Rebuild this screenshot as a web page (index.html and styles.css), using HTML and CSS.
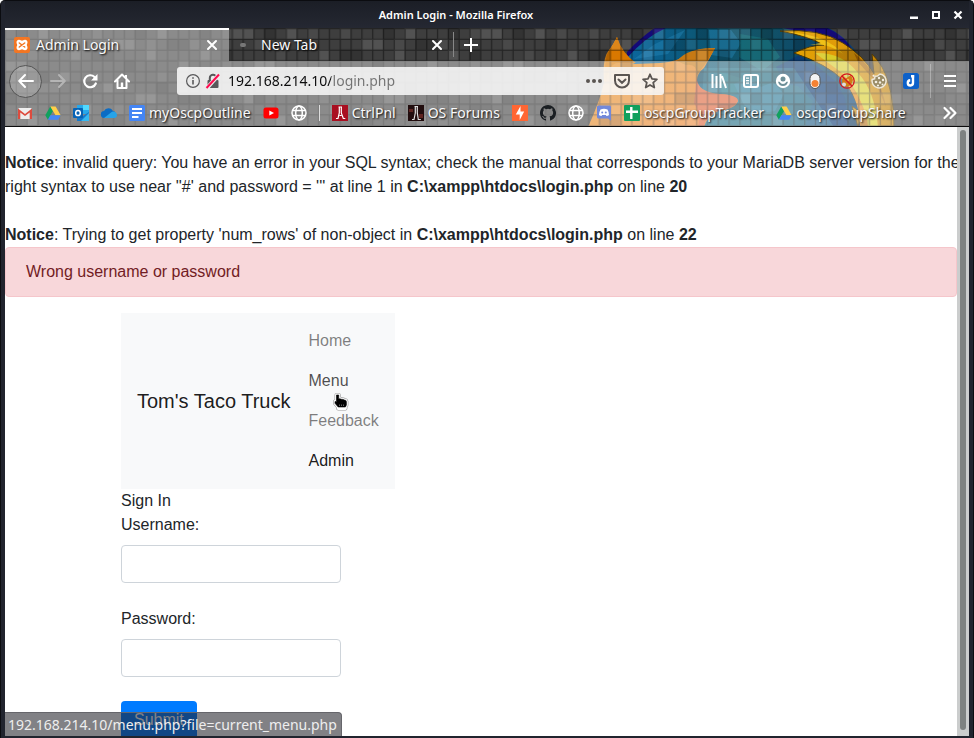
FILE: index.html
```html
<!DOCTYPE html>
<html lang="en">
<head>
<meta charset="utf-8">
<title>Admin Login</title>
<link rel="stylesheet" href="styles.css">
</head>
<body>
<svg class="defs" aria-hidden="true">
  <symbol id="close" viewBox="0 0 16 16"><path d="M4 4l8 8M12 4l-8 8" fill="none" stroke="currentColor" stroke-width="2" stroke-linecap="round"/></symbol>
  <symbol id="globe" viewBox="0 0 16 16"><g fill="none" stroke="#fff" stroke-width="1.500"><circle cx="8" cy="8" r="7"/><ellipse cx="8" cy="8" rx="3.300" ry="7"/><path d="M1.500 5.500h13M1.500 10.500h13"/></g></symbol>
  <symbol id="drive" viewBox="0 0 16 16"><path d="M5.300 1.500L.3 10.300l2.600 4.400L8 5.900z" fill="#11a15e"/><path d="M5.300 1.500h5.300l5.100 8.800h-5.200z" fill="#ffcf48"/><path d="M5.400 10.300h10.300l-2.600 4.400H2.900z" fill="#4587f4"/></symbol>
</svg>
<div class="window">
  <header class="titlebar">
    <span class="title">Admin Login - Mozilla Firefox</span>
    <div class="controls">
      <button aria-label="Minimize"><svg viewBox="0 0 16 16"><path d="M4 9.500h8V12H4z" fill="#fff"/></svg></button>
      <button aria-label="Maximize"><svg viewBox="0 0 16 16"><path d="M5 5h6v6H5z" fill="none" stroke="#fff" stroke-width="2"/></svg></button>
      <button aria-label="Close window"><svg viewBox="0 0 16 16"><path d="M4.500 4.500l7 7M11.500 4.500l-7 7" stroke="#fff" stroke-width="2.200"/></svg></button>
    </div>
  </header>

  <div class="chrome">
    <svg class="art" viewBox="580 28 389 99" aria-hidden="true">
      <defs>
        <linearGradient id="sea" x1="0" x2="1"><stop offset="0" stop-color="#0a6dae"/><stop offset=".35" stop-color="#0c5878"/><stop offset=".6" stop-color="#125366"/><stop offset="1" stop-color="#063b70"/></linearGradient>
        <linearGradient id="tail" x1="0" x2="1"><stop offset="0" stop-color="#e3a400"/><stop offset=".5" stop-color="#e09b0a"/><stop offset="1" stop-color="#bb7a00"/></linearGradient>
        <linearGradient id="fur" x1="0" x2="1" y1="0" y2="1"><stop offset="0" stop-color="#e08a12"/><stop offset="1" stop-color="#ea8030"/></linearGradient>
      </defs>
      <path d="M624 61Q645 36 667 26H825Q850 38 862 62L870 127H600V92z" fill="url(#sea)"/>
      <path d="M627 58Q645 37 668 27h-12Q640 38 627 52zM780 27h45q20 8 28 24l-18-10z" fill="#140a78"/>
      <path d="M655 44l30-14-17 24-34 5zM709 30h22l10 13-9 15-21-3z" fill="#2889bb" opacity=".4"/>
      <path d="M740 34l28 5 12 18-18 14-23-14zM720 72l24 7-4 14-18 3z" fill="#18707a" opacity=".7"/>
      <path d="M799 55l19 12 17 14 10 17 3 29h-43l8-26-15-15-13-2-9-17z" fill="#0a2f78" opacity=".55"/>
      <path d="M734 84q16-10 27 3l12-5 11 12-9 17-21 3-10-9z" fill="#2f7eaa" opacity=".55"/>
      <path d="M704 68h90l40 59H700z" fill="#2f8aa0" opacity=".4"/>
      <path d="M617 37Q623 60 635 64L660 63Q678 62 687 54Q697 48 715 48Q710 58 704 68Q696 74 697 83Q701 94 720 94Q735 95 738 101Q735 109 718 111Q706 118 704 127H588Q600 101 604 82Q602 58 609 50Q613 45 617 37z" fill="url(#fur)"/>
      <path d="M617 37q5 16 19 26h-17q-10-1-13 19-3-26 5-34z" fill="#d97800"/>
      <path d="M697 75q-2 17 23 19 18 1 18 7-4 8-20 10-14 7-14 16h-6q3-12-4-24z" fill="#dd6236"/>
      <path d="M677 61q10-13 38-13-7 13-18 27 0-12-11-10z" fill="#c67914"/>
      <path d="M780 31Q820 28 843 43Q864 56 874 74L872 54Q884 66 888 82Q894 101 894 127H864Q862 113 858 127L852 106L861 113Q854 94 844 81Q827 64 794 53Q810 45 824 45Q807 36 780 31z" fill="url(#tail)" stroke="#503b08" stroke-width="1"/>
      <path d="M815 53Q842 52 858 73Q875 91 878 127H865Q865 97 842 73z" fill="#d8cb27"/>
      <path d="M788 32q39 3 55 22-15-12-33-9l11-2q-12-7-33-11z" fill="#efc018"/>
      <path d="M854 53q26 20 32 54l-11-26-17-19z" fill="#aa6500"/>
      <path d="M842 76q24 25 26 51h-8q0-27-18-51z" fill="#e18a1c"/>
    </svg>
    <svg class="tiles" aria-hidden="true">
      <defs>
        <pattern id="mosaic" width="23" height="9" patternUnits="userSpaceOnUse" patternTransform="scale(10.8)">
          <path d="M1 0h1v1H1zM4 1h1v1H4zM8 2h2v1H8zM12 0h1v1h-1zM15 1h2v1h-2zM20 2h1v1h-1zM18 0h1v1h-1zM2 4h2v1H2zM7 5h1v1H7zM11 3h1v1h-1zM16 6h2v1h-2zM21 4h1v1h-1zM4 7h1v1H4zM9 8h2v1H9zM14 5h1v1h-1zM20 7h2v1h-2zM0 6h1v1H0zM18 4h1v1h-1z" fill="#000" opacity=".18"/>
          <path d="M3 0h1v1H3zM6 2h1v1H6zM10 1h2v1h-2zM14 0h1v1h-1zM13 2h1v1h-1zM18 2h1v1h-1zM21 0h2v1h-2zM0 3h2v1H0zM5 4h1v1H5zM9 5h1v1H9zM12 6h2v1h-2zM19 5h1v1h-1zM15 8h1v1h-1zM2 8h1v1H2zM7 7h1v1H7zM22 6h1v1h-1zM16 3h1v1h-1z" fill="#fff" opacity=".1"/>
          <path d="M0 1h1v1H0zM5 0h1v1H5zM2 2h1v1H2zM8 0h1v1H8zM13 1h1v1h-1zM17 1h1v1h-1zM20 0h1v1h-1zM3 5h2v1H3zM10 7h1v1h-1zM6 6h1v1H6zM14 4h1v1h-1zM17 8h1v1h-1zM20 3h1v1h-1z" fill="#fff" opacity=".06"/>
          <path d="M.05 0v9M1.050 0v9M2.050 0v9M3.050 0v9M4.050 0v9M5.050 0v9M6.050 0v9M7.050 0v9M8.050 0v9M9.050 0v9M10.050 0v9M11.050 0v9M12.050 0v9M13.050 0v9M14.050 0v9M15.050 0v9M16.050 0v9M17.050 0v9M18.050 0v9M19.050 0v9M20.050 0v9M21.050 0v9M22.050 0v9M0 .05h23M0 1.050h23M0 2.050h23M0 3.050h23M0 4.050h23M0 5.050h23M0 6.050h23M0 7.050h23M0 8.050h23" fill="none" stroke="#000" stroke-width=".12" opacity=".42"/>
        </pattern>
      </defs>
      <rect width="100%" height="100%" fill="url(#mosaic)"/>
    </svg>

    <div class="tabs">
      <div class="tab selected">
        <svg class="icon" viewBox="0 0 16 16"><rect width="16" height="16" rx="2" fill="#f37623"/><path d="M5 2.800c1.500 0 2 1 3 1s1.500-1 3-1 2.500 1 2.500 2.500S12.800 7.200 12.800 8s.7 1.200.7 2.700-1 2.500-2.500 2.500-2-1-3-1-1.500 1-3 1-2.500-1-2.500-2.500S3.200 8.800 3.200 8s-.7-1.200-.7-2.700S3.500 2.800 5 2.800z" fill="#fff"/><path d="M5.300 6L10.700 10M10.700 6L5.300 10" stroke="#f37623" stroke-width="1.500" stroke-linecap="round"/></svg>
        <span class="tab-label">Admin Login</span>
        <button class="tab-close" aria-label="Close Admin Login"><svg class="icon"><use href="#close"/></svg></button>
      </div>
      <div class="tab">
        <span class="dot"></span>
        <span class="tab-label blank">New Tab</span>
        <button class="tab-close" aria-label="Close New Tab"><svg class="icon"><use href="#close"/></svg></button>
      </div>
      <button class="new-tab" aria-label="Open a new tab"><svg class="icon" viewBox="0 0 16 16"><path d="M8 1v14M1 8h14" stroke="#fff" stroke-width="2"/></svg></button>
    </div>

    <div class="toolbars">
      <nav class="navbar" aria-label="Navigation">
        <button class="tool back" aria-label="Back"><svg class="icon" viewBox="0 0 16 16"><path d="M15 8H1.500M7 2L1.200 8 7 14" fill="none" stroke="#fff" stroke-width="2" stroke-linecap="round" stroke-linejoin="round"/></svg></button>
        <button class="tool" aria-label="Forward" disabled><svg class="icon" viewBox="0 0 16 16"><path d="M1 8h13.500M9 2l5.800 6L9 14" fill="none" stroke="#b5b5b5" stroke-width="2" stroke-linecap="round" stroke-linejoin="round"/></svg></button>
        <button class="tool" aria-label="Reload"><svg class="icon" viewBox="0 0 16 16"><path d="M13.800 10.500A6 6 0 1 1 12.500 4" fill="none" stroke="#fff" stroke-width="2.200" stroke-linecap="round"/><path d="M15.500 1v6.500H9z" fill="#fff"/></svg></button>
        <button class="tool" aria-label="Home"><svg class="icon" viewBox="0 0 16 16"><path d="M1 8.500l7-7 7 7M3.500 7.500V15h9V7.500" fill="none" stroke="#fff" stroke-width="2" stroke-linecap="round" stroke-linejoin="round"/><path d="M6.800 9.500h2.400V14H6.800zM11 2h2v4l-2-2z" fill="#fff"/></svg></button>
        <div class="urlbar">
          <svg class="icon" viewBox="0 0 16 16"><circle cx="8" cy="8" r="6.400" fill="none" stroke="#58585a" stroke-width="1.200"/><path d="M7.200 7h1.600v4.500H7.200zM7.200 4.200h1.600v1.600H7.200z" fill="#58585a"/></svg>
          <svg class="icon" viewBox="0 0 16 16"><path d="M4.800 8V5a3.200 3.200 0 0 1 6.400 0v3" fill="none" stroke="#58585a" stroke-width="2"/><rect x="2.500" y="7" width="11" height="8" rx="1" fill="#58585a"/><path d="M2 15L14 1.500" stroke="#eee" stroke-width="4"/><path d="M1.500 15L14 1.500" stroke="#ff0b4f" stroke-width="2"/></svg>
          <input class="address" type="text" aria-label="Address" value="192.168.214.10/login.php">
          <button aria-label="Page actions"><svg class="icon" viewBox="0 0 16 16"><g fill="#5a5552"><circle cx="2" cy="8" r="2"/><circle cx="8" cy="8" r="2"/><circle cx="14" cy="8" r="2"/></g></svg></button>
          <button aria-label="Save to Pocket"><svg class="icon" viewBox="0 0 16 16"><path d="M1 2h14v5.500c0 4-3 7-7 7s-7-3-7-7z" fill="none" stroke="#5a5552" stroke-width="2" stroke-linejoin="round"/><path d="M4.500 6.500L8 9.800l3.500-3.300" fill="none" stroke="#5a5552" stroke-width="2" stroke-linecap="round"/></svg></button>
          <button aria-label="Bookmark this page"><svg class="icon" viewBox="0 0 16 16"><path d="M8 1.300l2 4.500 4.900.5-3.700 3.300 1.100 4.900L8 12l-4.300 2.500 1.100-4.900L1.100 6.300 6 5.800z" fill="none" stroke="#5a5552" stroke-width="1.800" stroke-linejoin="round"/></svg></button>
        </div>
        <button class="tool" aria-label="Library"><svg class="icon" viewBox="0 0 16 16"><path d="M1.500 1v14M5.500 3v12M9.500 1v14M11 3l4 12" stroke="#fff" stroke-width="2"/></svg></button>
        <button class="tool" aria-label="Sidebars"><svg class="icon" viewBox="0 0 16 16"><rect x="1" y="2" width="14" height="12" rx="2" fill="none" stroke="#fff" stroke-width="2"/><path d="M8 2v12" stroke="#fff" stroke-width="1.600"/><path d="M3 5.200h3M3 7.700h3M3 10.200h3" stroke="#fff" stroke-width="1.200"/></svg></button>
        <button class="tool" aria-label="Account"><svg class="icon" viewBox="0 0 16 16"><circle cx="8" cy="8" r="7.200" fill="#fff"/><circle cx="8" cy="6" r="2.500" fill="#6d8f98"/><path d="M3 8.800h1.500Q6 11 8 11t3.500-2.200H13Q12 13 8 13T3 8.800z" fill="#6d8f98"/></svg></button>
        <button class="tool" aria-label="Toggle extension"><svg class="icon" viewBox="0 0 16 16"><rect x="3" y=".5" width="10" height="15" rx="5" fill="#f4f4f4" stroke="#555"/><circle cx="8" cy="10.500" r="3.500" fill="#f58233"/></svg></button>
        <button class="tool" aria-label="Proxy extension"><svg class="icon" viewBox="0 0 16 16"><path d="M3 8l1-4 2 2 3-2 3-2 2 5-2 5-4 2-4-1z" fill="#d37b15"/><circle cx="5" cy="11.500" r="2" fill="#ddd"/><circle cx="9" cy="7" r="1.300" fill="#f2b84c"/><circle cx="8" cy="8" r="7.200" fill="none" stroke="#d4161c" stroke-width="1.300"/><path d="M3 3l10 10" stroke="#d4161c" stroke-width="1.400"/></svg></button>
        <button class="tool" aria-label="Cookies"><svg class="icon" viewBox="0 0 16 16"><path d="M9 1a7 7 0 1 1-7.800 5.500l2.400-.7.400-2.600L6.500 3z" fill="#9a8c66" stroke="#eee8da" stroke-width="1.500" stroke-linejoin="round"/><g fill="#f4efe3"><circle cx="8" cy="5" r="1.200"/><circle cx="12" cy="7" r="1.200"/><circle cx="5" cy="9" r="1.300"/><circle cx="9" cy="9.500" r="1.200"/><circle cx="7" cy="12.500" r="1.100"/><circle cx="11.500" cy="11.500" r="1"/><circle cx="2.500" cy="2.800" r="1"/></g></svg></button>
        <button class="tool" aria-label="Joplin clipper"><svg class="icon" viewBox="0 0 16 16"><rect width="16" height="16" rx="2.500" fill="#0d61c9"/><path d="M8 3.300h3.300M10 3v6.800a2.600 2.600 0 1 1-2.800-2.500" fill="none" stroke="#fff" stroke-width="2.400"/></svg></button>
        <span class="divider"></span>
        <button class="tool" aria-label="Open menu"><svg class="icon" viewBox="0 0 16 16"><path d="M2 3h12M2 8h12M2 13h12" stroke="#fff" stroke-width="2.200"/></svg></button>
      </nav>

      <nav class="bookmarks" aria-label="Bookmarks">
        <a href="#" aria-label="Gmail"><svg class="icon" viewBox="0 0 16 16"><path d="M1.500 3h13v11h-13z" fill="#eee"/><path d="M1 14V3.500L8 9l7-5.500V14h-2.300V7.500L8 11 3.300 7.500V14z" fill="#dd4b3e"/></svg></a>
        <a href="#" aria-label="Drive"><svg class="icon"><use href="#drive"/></svg></a>
        <a href="#" aria-label="Outlook"><svg class="icon" viewBox="0 0 16 16"><path d="M4 0h12v9H4z" fill="#28a8ea"/><path d="M10 0h6v5h-6z" fill="#50d9ff"/><path d="M4 7l6 4 6-4v9H4z" fill="#1479cc"/><path d="M8 16l8-8v8z" fill="#35b8f1"/><rect y="3" width="10" height="10" rx="1" fill="#0763b5"/><ellipse cx="5" cy="8" rx="2.300" ry="2.600" fill="none" stroke="#fff" stroke-width="1.500"/></svg></a>
        <a href="#" aria-label="OneDrive"><svg class="icon" viewBox="0 0 16 16"><path d="M3.500 13a3.500 3.500 0 0 1-.5-7 5 5 0 0 1 8.800-.3A4 4 0 0 1 13 13z" fill="#0c6cc4"/><path d="M3 13l7-5.500c2-2 6-.5 6 2.700 0 1.800-1.300 2.800-2.700 2.800z" fill="#27a3e8"/></svg></a>
        <a href="#"><svg class="icon" viewBox="0 0 16 16"><rect width="16" height="16" rx="1.500" fill="#4485f4"/><path d="M3 4h10M3 8h10M3 12h6.500" stroke="#fff" stroke-width="1.800"/></svg><span>myOscpOutline</span></a>
        <a href="#" aria-label="YouTube"><svg class="icon" viewBox="0 0 16 16"><rect x=".5" y="2.500" width="15" height="11" rx="2.500" fill="#f00"/><path d="M6.300 5.500v5L11 8z" fill="#fff"/></svg></a>
        <a href="#" aria-label="Web page"><svg class="icon"><use href="#globe"/></svg></a>
        <span class="bar"></span>
        <a href="#"><svg class="icon" viewBox="0 0 16 16"><path d="M0 0h16v16H0z" fill="#a90f21"/><path d="M6.500 2h3.500M7.300 2v6L6 13.500H4M9.300 2v6l2 5.500h2M7.500 10.500h2" fill="none" stroke="#fff" stroke-width="1.200"/></svg><span>CtrlPnl</span></a>
        <a href="#"><svg class="icon" viewBox="0 0 16 16"><path d="M0 0h16v16H0z" fill="#210d0e"/><path d="M1 4h4v3H1zM11 9h4v4h-4z" fill="#5e2420"/><path d="M6.500 1.500h3.500M7.300 1.500V8L6 14.500H4M9.300 1.500V8l1 6.500h2.500" fill="none" stroke="#ddd" stroke-width="1.200"/></svg><span>OS Forums</span></a>
        <a href="#" aria-label="Burp"><svg class="icon" viewBox="0 0 16 16"><path d="M0 0h16v16H0z" fill="#ff6633"/><path d="M8.500 1v5.500h3.700L7.700 15V9.500H3.800z" fill="#fff"/></svg></a>
        <a href="#" aria-label="GitHub"><svg class="icon" viewBox="0 0 16 16"><path d="M8 0C3.580 0 0 3.580 0 8c0 3.540 2.290 6.530 5.470 7.590.4.070.55-.17.55-.38 0-.19-.01-.82-.01-1.490-2.010.37-2.530-.49-2.690-.94-.09-.23-.48-.94-.82-1.130-.28-.15-.68-.52-.01-.53.63-.01 1.080.58 1.230.82.72 1.210 1.870.87 2.330.66.07-.52.28-.87.51-1.070-1.780-.2-3.640-.89-3.640-3.950 0-.87.31-1.590.82-2.150-.08-.2-.36-1.020.08-2.120 0 0 .67-.21 2.200.82a7.500 7.500 0 0 1 4 0c1.530-1.040 2.200-.82 2.200-.82.44 1.100.16 1.920.08 2.120.51.56.82 1.270.82 2.150 0 3.070-1.870 3.750-3.650 3.950.29.25.54.73.54 1.480 0 1.070-.01 1.930-.01 2.200 0 .21.15.46.55.38A8 8 0 0 0 8 0z" fill="#1b1f23"/></svg></a>
        <a href="#" aria-label="Web page"><svg class="icon"><use href="#globe"/></svg></a>
        <a href="#" aria-label="Discord"><svg class="icon" viewBox="0 0 16 16"><path d="M2.500.5h11a1.500 1.500 0 0 1 1.500 1.500v13.800L12 13.500H2.500A1.500 1.500 0 0 1 1 12V2A1.500 1.500 0 0 1 2.500.5z" fill="#7289da"/><path d="M4.500 4.500q3.500-1.500 7 0 1.500 2.500 1.500 5.500-1 1-2.500 1l-.7-1H6.200l-.7 1Q4 11 3 10q0-3 1.500-5.500z" fill="#fff"/><circle cx="6.200" cy="7.600" r="1" fill="#7289da"/><circle cx="9.800" cy="7.600" r="1" fill="#7289da"/></svg></a>
        <a href="#"><svg class="icon" viewBox="0 0 16 16"><rect width="16" height="16" rx="1" fill="#11a05d"/><path d="M2 6.800h12M7.300 2v12" stroke="#fff" stroke-width="2.400"/></svg><span>oscpGroupTracker</span></a>
        <a href="#"><svg class="icon"><use href="#drive"/></svg><span>oscpGroupShare</span></a>
        <button class="tool more" aria-label="More bookmarks"><svg class="icon" viewBox="0 0 16 16"><path d="M2.500 3l5 5-5 5M8.500 3l5 5-5 5" fill="none" stroke="#fff" stroke-width="2.200" stroke-linecap="round" stroke-linejoin="round"/></svg></button>
      </nav>
    </div>
  </div>

  <div class="viewport">
    <main class="page">
      <div class="notices">
        <br>
        <b>Notice</b>: invalid query: You have an error in your SQL syntax; check the manual that corresponds to your MariaDB server version for the right syntax to use near ''#' and password = ''' at line 1 in <b>C:\xampp\htdocs\login.php</b> on line <b>20</b><br>
        <br>
        <b>Notice</b>: Trying to get property 'num_rows' of non-object in <b>C:\xampp\htdocs\login.php</b> on line <b>22</b><br>
      </div>
      <div class="alert" role="alert">Wrong username or password</div>
      <div class="container">
        <nav class="site-nav" aria-label="Site">
          <a class="brand" href="#">Tom's Taco Truck</a>
          <ul class="links">
            <li><a href="#">Home</a></li>
            <li class="hovered"><a href="#">Menu</a>
              <svg class="pointer" viewBox="0 0 16 18" aria-hidden="true"><path d="M3.500 2h2.200V6l1-.3 1.800.6 1.600.1 1.400.7 1.300.3.600 1.200V12l-1 2v1.500H5.200V14L2 10.300V8.500h.7l.8.800z" fill="#999" stroke="#999" stroke-width="4" stroke-linejoin="round"/><path d="M3.500 2h2.200V6l1-.3 1.800.6 1.600.1 1.400.7 1.300.3.600 1.200V12l-1 2v1.500H5.200V14L2 10.300V8.500h.7l.8.800z" fill="#fff" stroke="#fff" stroke-width="2.800" stroke-linejoin="round"/><path d="M3.500 2h2.200V6l1-.3 1.800.6 1.600.1 1.400.7 1.300.3.600 1.200V12l-1 2H5.200L2 10.300V8.500h.7l.8.800z" fill="#000" stroke="#000" stroke-width=".6"/><path d="M6.500 11.500V13M8.500 11.500V13M10.500 11.500V13" stroke="#888" stroke-width=".7"/></svg>
            </li>
            <li><a href="#">Feedback</a></li>
            <li class="active"><a href="#">Admin</a></li>
          </ul>
        </nav>
        <div>Sign In</div>
        <form>
          <label for="username">Username:</label>
          <input class="field" id="username" type="text">
          <label for="password">Password:</label>
          <input class="field" id="password" type="password">
          <button class="submit" type="button">Submit</button>
        </form>
      </div>
    </main>
    <div class="scrollbar"><div class="thumb"></div></div>
    <div class="status">192.168.214.10/menu.php?file=current_menu.php</div>
  </div>
</div>
</body>
</html>
```
FILE: styles.css
```css
* { box-sizing: border-box; }

body {
  margin: 0;
  background: #fff;
  font-family: "Liberation Sans", Arial, sans-serif;
  font-size: 16px;
  line-height: 24px;
  color: #212529;
}

button {
  border: 0;
  padding: 0;
  background: none;
  color: #fff;
  font: inherit;
}

.defs { display: none; }

.icon {
  display: block;
  flex: none;
  width: 16px;
  height: 16px;
}

.window {
  display: flex;
  flex-direction: column;
  height: 100vh;
  overflow: hidden;
  padding: 0 4px 2px;
  border: 1px solid #0b0c10;
  border-bottom: 0;
  border-radius: 5px 5px 0 0;
  background: #21242e;
}

/* Title bar */
.titlebar {
  flex: none;
  display: flex;
  align-items: center;
  height: 27px;
  padding-left: 4px;
  background: linear-gradient(#1b1e26, #252832);
  color: #fff;
  font: 600 11px/16px "Noto Sans", sans-serif;
}
.title { flex: 1; text-align: center; }
.controls { display: flex; }
.controls button { width: 22px; padding: 0 3px; }
.controls svg { display: block; width: 16px; height: 16px; }

/* Browser chrome */
.chrome {
  flex: none;
  position: relative;
  overflow: hidden;
  border-bottom: 1px solid #0c0c0d;
  background: #3e3e3e;
  color: #f9f9fa;
  font: 14px/20px "Noto Sans", sans-serif;
  text-shadow: 1px 1px 2px #000;
}
.art {
  position: absolute;
  top: 0;
  right: 0;
  width: 389px;
  height: 99px;
}
.tiles {
  position: absolute;
  top: 0;
  left: 0;
  width: 100%;
  height: 100%;
}
.tabs {
  position: relative;
  display: flex;
  height: 33px;
}
.tab {
  display: flex;
  align-items: center;
  width: 225px;
  padding: 0 8px 0 9px;
  border-right: 1px solid transparent;
}
.tab.selected {
  width: 224px;
  padding: 0 9px 2px;
  border-top: 2px solid #fff;
  border-right: 0;
  background: rgba(255, 255, 255, .4);
}
.tab-label { flex: 1; margin-left: 6px; }
.tab-label.blank { margin-left: 15px; }
.tab:not(.selected) { border-image: linear-gradient(transparent 15%, #888 15%, #888 85%, transparent 85%) 1; }
.dot {
  width: 6px;
  height: 4px;
  margin-left: 2px;
  border-radius: 2px;
  background: #777;
}
.new-tab { padding: 0 9px; }

.toolbars {
  position: relative;
  background: rgba(255, 255, 255, .4);
}
.navbar {
  display: flex;
  align-items: center;
  height: 40px;
  padding: 0 3px 0 4px;
}
.tool {
  flex: none;
  display: flex;
  align-items: center;
  justify-content: center;
  width: 32px;
  height: 32px;
}
.tool.back {
  width: 33px;
  height: 33px;
  border: 1px solid #555;
  border-radius: 50%;
  background: rgba(255, 255, 255, .18);
}
.urlbar {
  flex: 1;
  display: flex;
  align-items: center;
  gap: 4px;
  height: 28px;
  margin: 0 39px;
  padding: 0 6px 0 8px;
  border-radius: 3px;
  background: rgba(250, 250, 250, .86);
}
.urlbar button { margin-left: 8px; }
.address {
  flex: 1;
  min-width: 0;
  height: 24px;
  margin-left: 3px;
  padding: 0;
  border: 0;
  outline: 0;
  background: linear-gradient(90deg, #0c0c0d 103px, #737373 103px);
  background-clip: text;
  color: transparent;
  font: 14px/24px "Noto Sans", sans-serif;
}
.divider {
  width: 1px;
  height: 34px;
  margin: 0 3px;
  background: rgba(255, 255, 255, .3);
}

.bookmarks {
  display: flex;
  align-items: center;
  height: 25px;
  padding: 0 3px 2px 6px;
}
.bookmarks a {
  flex: none;
  display: flex;
  align-items: center;
  gap: 4px;
  padding: 0 6px;
  color: inherit;
  text-decoration: none;
}
.bar {
  width: 1px;
  height: 16px;
  margin: 0 6px;
  background: #ddd;
}
.tool.more { height: 20px; margin-left: auto; }

/* Web page */
.viewport {
  flex: 1;
  min-height: 0;
  position: relative;
  display: flex;
  overflow: hidden;
  background: #fff;
}
.page {
  flex: 1;
  min-width: 0;
}
.notices { margin-right: -6px; }
.alert {
  margin-bottom: 16px;
  padding: 12px 20px;
  border: 1px solid #f5c6cb;
  border-radius: 4px;
  background: #f8d7da;
  color: #721c24;
}
.container {
  max-width: 720px;
  margin: 0 auto;
}
.site-nav {
  display: flex;
  align-items: center;
  gap: 18px;
  width: fit-content;
  padding: 8px 16px;
  background: #f8f9fa;
}
.site-nav a { color: rgba(0, 0, 0, .5); text-decoration: none; }
.site-nav .brand { color: rgba(0, 0, 0, .9); font-size: 20px; }
.links { margin: 0; padding: 0; list-style: none; }
.links li { position: relative; padding: 8px 0; }
.links .hovered a { color: rgba(0, 0, 0, .7); }
.links .active a { color: rgba(0, 0, 0, .9); }
.pointer {
  position: absolute;
  top: 32px;
  left: 24px;
  z-index: 1;
  width: 16px;
  height: 18px;
}
label { display: block; margin-bottom: 8px; }
.field {
  display: block;
  width: 220px;
  height: 38px;
  margin-bottom: 24px;
  padding: 6px 12px;
  border: 1px solid #ced4da;
  border-radius: 4px;
  background: #fff;
  font: inherit;
}
.submit {
  padding: 7px 13px;
  border-radius: 4px;
  background: #007bff;
}

.scrollbar {
  flex: none;
  width: 12px;
  padding: 3px 3px 6px;
  background: #cbcdcd;
}
.thumb {
  height: 100%;
  border-radius: 3px;
  background: #7e8281;
}
.status {
  position: absolute;
  bottom: 0;
  left: 0;
  padding: 2px 4px 1px 3px;
  border-top: 1px solid #66666b;
  border-right: 1px solid #66666b;
  border-radius: 0 4px 0 0;
  background: rgba(30, 30, 38, .56);
  color: #eee;
  font: 14px/20px "Noto Sans", sans-serif;
}
```
